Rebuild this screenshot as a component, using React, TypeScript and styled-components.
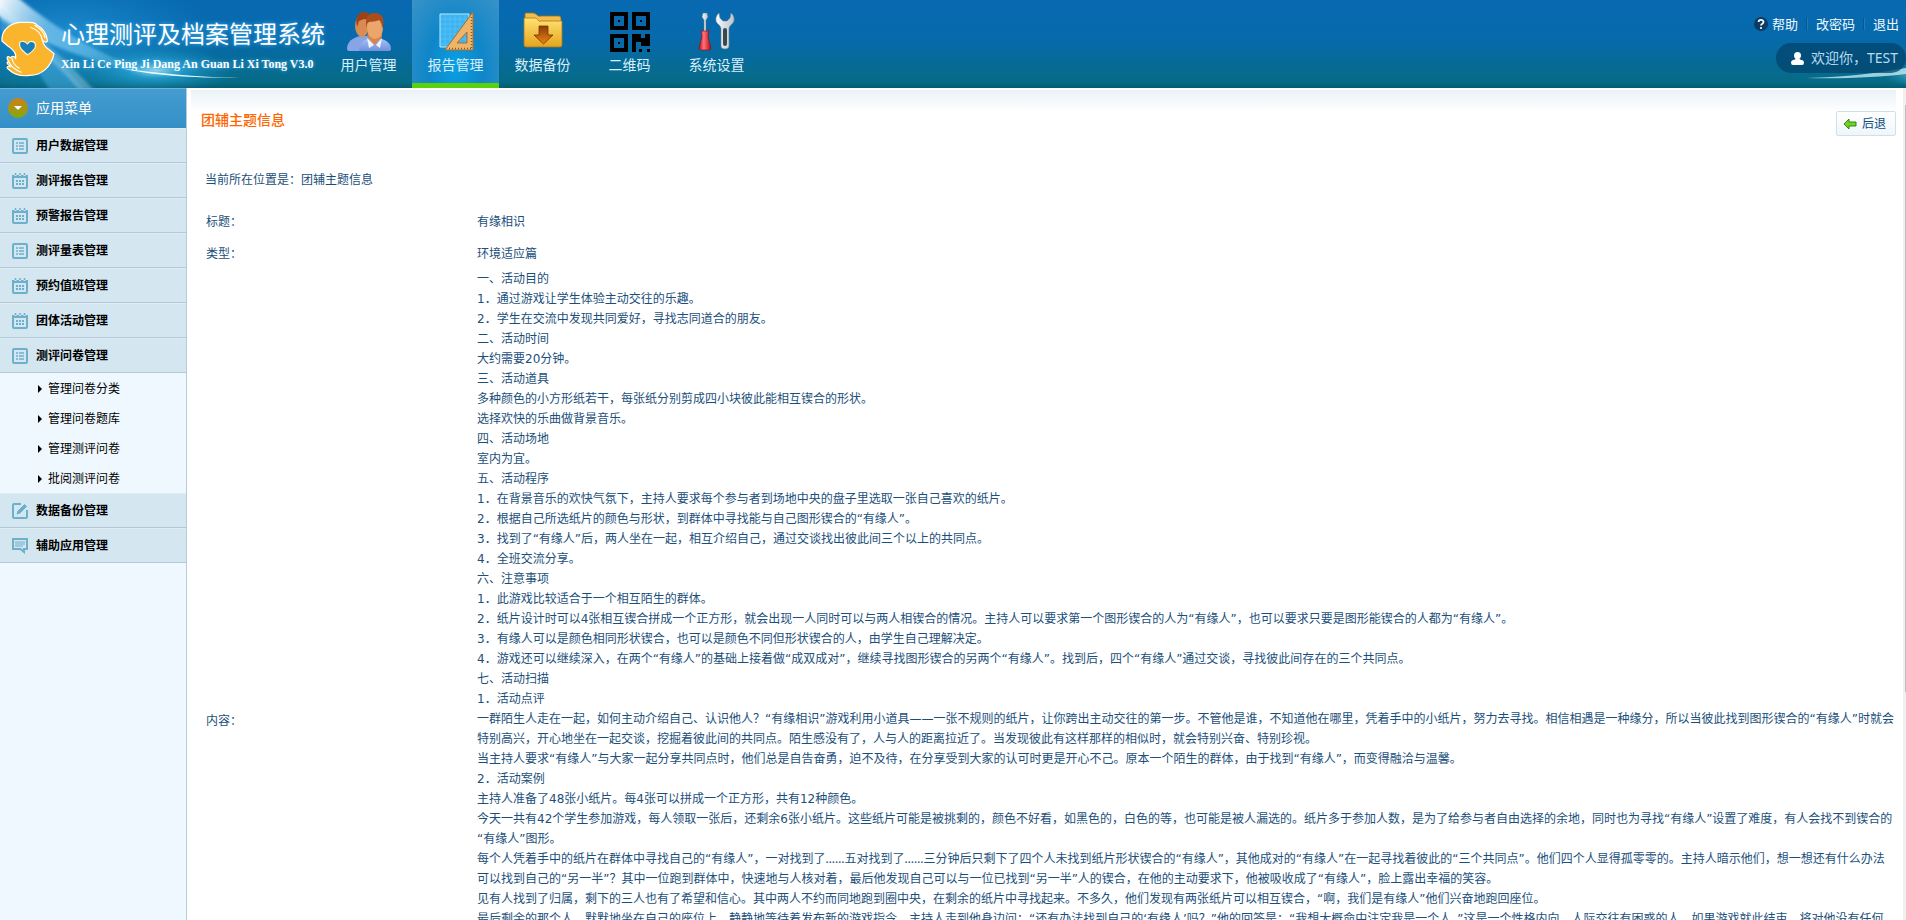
import React from "react";
import styled, { createGlobalStyle, css } from "styled-components";

const GlobalStyle = createGlobalStyle`
  * { box-sizing: border-box; }
  body {
    margin: 0;
    background: #fff;
    color: #1b4f7a;
    font-family: "DejaVu Sans", "Noto Sans CJK SC", sans-serif;
    font-size: 12px;
    line-height: 20px;
  }
  a { color: inherit; text-decoration: none; }
  button { font: inherit; cursor: pointer; }
  ul { list-style: none; margin: 0; padding: 0; }
`;

const Shell = styled.div`
  display: flex;
  flex-direction: column;
  height: 100vh;
  overflow: hidden;
`;

const Header = styled.header`
  position: relative;
  display: flex;
  flex: none;
  height: 88px;
  overflow: hidden;
  color: #d8effc;
  font-family: "Noto Sans", "Noto Sans CJK SC", sans-serif;
  background: linear-gradient(#0869b1 0, #066aab 40px, #066b86 82px, #055d72 88px);
`;

const Glow = styled.svg<{ $side: "left" | "right" }>`
  position: absolute;
  top: 0;
  ${(p) => (p.$side === "left" ? "left: 0;" : "right: 0;")}
`;

const Brand = styled.div`
  position: relative;
  display: flex;
  flex: none;
  width: 325px;
`;

const BrandText = styled.div`
  padding: 16px 0 0 6px;
  white-space: nowrap;
`;

const BrandName = styled.h1`
  margin: 0;
  font-size: 24px;
  line-height: 36px;
  font-weight: 400;
  color: #fff;
  text-shadow: 0 0 4px #4db4ee;
`;

const BrandLatin = styled.div`
  font: 700 12px/24px "Liberation Serif", serif;
  color: #fff;
  text-shadow: 0 0 4px #4db4ee;
`;

const TopNav = styled.nav`
  position: relative;
  display: flex;
  flex: 1;
`;

const NavItem = styled.a<{ $active?: boolean }>`
  display: flex;
  flex-direction: column;
  align-items: center;
  width: 87px;
  padding-top: 12px;
  font-size: 14px;
  line-height: 26px;
  ${(p) =>
    p.$active &&
    css`
      border-bottom: 5px solid #5bd10c;
      background: radial-gradient(ellipse at 50% 80%, #0aa0e4 0, #0f86c8 45%, #3a92c8 100%);
    `}
`;

const Account = styled.div`
  position: relative;
  display: flex;
  flex-direction: column;
  align-items: flex-end;
  padding-top: 14px;
  gap: 9px;
`;

const Links = styled.div`
  display: flex;
  align-items: center;
  padding-right: 7px;
  font-size: 13px;
  line-height: 20px;
  color: #f0f9ff;
  svg { margin-right: 4px; }
`;

const LinkDivider = styled.span`
  width: 2px;
  height: 12px;
  margin: 0 8px;
  border-left: 1px solid #0a5591;
  border-right: 1px solid #1a7bbd;
`;

const Welcome = styled.div`
  display: flex;
  align-items: center;
  gap: 7px;
  height: 30px;
  padding: 0 8px 0 15px;
  border-radius: 15px;
  font-size: 14px;
  color: #b5dcf1;
  background: rgba(3, 68, 110, 0.75);
`;

const Body = styled.div`
  display: flex;
  flex: 1;
  min-height: 0;
`;

const Sidebar = styled.aside`
  flex: none;
  width: 187px;
  border-right: 1px solid #b3cddc;
  background: #eff8fe;
  color: #000;
`;

const SideHead = styled.div`
  display: flex;
  align-items: center;
  gap: 8px;
  height: 40px;
  padding: 0 0 2px 8px;
  border-top: 1px solid #6db5dc;
  font-size: 14px;
  color: #fff;
  background: linear-gradient(#459cd0, #3390c7);
`;

const MenuLink = styled.a`
  display: flex;
  align-items: center;
  gap: 8px;
  height: 35px;
  padding-left: 12px;
  border-top: 1px solid #dfecf3;
  border-bottom: 1px solid #b3c8d6;
  font-weight: 700;
  background: #d4e6f0;
`;

const SubLink = styled.a`
  display: flex;
  align-items: center;
  gap: 6px;
  height: 30px;
  padding: 2px 0 0 38px;
`;

const Main = styled.main`
  flex: 1;
  min-width: 0;
  margin: 2px 7px 0 4px;
  overflow: hidden;
  background: linear-gradient(#eaf2f6, #fff 22px);
`;

const TitleBar = styled.div`
  display: flex;
  justify-content: space-between;
  align-items: flex-end;
  padding: 20px 0 0 10px;
`;

const Title = styled.h2`
  margin: 0;
  padding-bottom: 6px;
  font-size: 14px;
  line-height: 20px;
  font-weight: 500;
  color: #ff6600;
`;

const BackButton = styled.button`
  display: flex;
  align-items: center;
  gap: 5px;
  height: 25px;
  padding: 0 9px 0 6px;
  border: 1px solid #cfe0ea;
  border-radius: 2px;
  color: #0a4a7c;
  background: linear-gradient(#fff, #eff6fb);
`;

const Crumb = styled.p`
  margin: 0;
  padding: 34px 14px 0;
`;

const Info = styled.table`
  width: 100%;
  margin-top: 15px;
  border-collapse: collapse;
`;

const Label = styled.th<{ $tall?: boolean }>`
  width: 286px;
  padding: ${(p) => (p.$tall ? "0" : "2px")} 0 0 15px;
  font-weight: 400;
  text-align: left;
  vertical-align: middle;
`;

const Value = styled.td<{ $tall?: boolean }>`
  height: ${(p) => (p.$tall ? "904px" : "32px")};
  padding: ${(p) => (p.$tall ? "0" : "2px")} 0 0;
  vertical-align: ${(p) => (p.$tall ? "top" : "middle")};
  p { margin: 0; }
`;

const Ellipsis = styled.span`
  font-family: "Noto Sans", sans-serif;
  line-height: 1;
`;

const ScrollTrack = styled.div`
  flex: none;
  width: 3px;
  padding: 17px 0 0 2px;
  background: #f0f0f0;
`;

const ScrollThumb = styled.div`
  height: 72%;
  background: #bdbdbd;
`;

const LogoMark = () => (
  <svg width="56" height="88" viewBox="0 0 56 88" fill="#fbb52d" stroke="#fff" strokeWidth="1.2" strokeLinejoin="round">
    <path d="M2 41C1 29 12 21 24 22C31 22 35 21 38 25C43 28 47 32 48 39C49 43 46 43 43 40C44 44 45 46 49 49L55 54C52 67 43 76 30 76C22 77 14 75 9 70C6 68 7 66 11 67C7 65 6 62 9 62C6 58 7 55 11 58C12 56 15 56 16 59C17 53 13 49 8 46Z" />
    <path d="M31 27C37 29 42 33 43 40M35 25C41 28 45 33 46 38M12 58C13 64 16 67 20 69M9 62C11 67 15 70 22 73" fill="none" />
    <path d="M28 55C22 50 19 47 20 43C21 40 26 41 28 44C30 40 35 41 36 44C37 48 33 52 28 55Z" fill="#1680be" stroke="#fff4c8" />
  </svg>
);

const LeftGlow = () => (
  <Glow $side="left" width="300" height="88" viewBox="0 0 300 88" aria-hidden="true">
    <defs>
      <linearGradient id="beam" gradientUnits="userSpaceOnUse" x1="0" y1="0" x2="160" y2="80">
        <stop offset="0" stopColor="#fff" stopOpacity=".95" />
        <stop offset=".3" stopColor="#8fd0f5" stopOpacity=".65" />
        <stop offset="1" stopColor="#6fd4f5" stopOpacity=".3" />
      </linearGradient>
      <radialGradient id="flare">
        <stop offset="0" stopColor="#c9f7ff" stopOpacity=".9" />
        <stop offset=".35" stopColor="#2fb0e6" stopOpacity=".7" />
        <stop offset="1" stopColor="#1a8fc0" stopOpacity="0" />
      </radialGradient>
      <radialGradient id="haze">
        <stop offset="0" stopColor="#2c9fe0" stopOpacity=".7" />
        <stop offset="1" stopColor="#1a8fd0" stopOpacity="0" />
      </radialGradient>
      <filter id="soft"><feGaussianBlur stdDeviation="1.5" /></filter>
    </defs>
    <ellipse cx="70" cy="40" rx="150" ry="64" fill="url(#haze)" />
    <g filter="url(#soft)">
      <path d="M0 2C36 38 60 62 84 90H50C32 62 16 42 0 30Z" fill="#4fb2ea" opacity=".45" />
      <path d="M-4 -4H16C62 34 110 60 160 76C100 66 40 44 -4 14Z" fill="url(#beam)" />
      <path d="M0 8C40 36 66 60 94 90H80C54 62 24 34 0 20Z" fill="#a9dcf3" opacity=".4" />
    </g>
    <ellipse cx="156" cy="70" rx="80" ry="24" fill="url(#flare)" opacity=".85" />
    <path d="M120 68C150 75 190 78 240 78C195 77 155 73 120 68Z" fill="#e5fdff" />
  </Glow>
);

const RightGlow = () => (
  <Glow $side="right" width="120" height="88" viewBox="0 0 120 88" aria-hidden="true">
    <defs>
      <radialGradient id="flareRight" cx="1" cy=".5">
        <stop offset="0" stopColor="#e6fcff" />
        <stop offset=".4" stopColor="#54b6cc" stopOpacity=".7" />
        <stop offset="1" stopColor="#1a8fa8" stopOpacity="0" />
      </radialGradient>
    </defs>
    <ellipse cx="96" cy="75" rx="46" ry="13" fill="url(#flareRight)" />
    <path d="M20 78C60 77 94 73 120 68V74C94 77 60 79 20 78Z" fill="#dcfaff" opacity=".7" />
  </Glow>
);

const UsersIcon = () => (
  <svg width="48" height="40" viewBox="0 0 48 40">
    <defs>
      <linearGradient id="shirt" x1="0" y1="0" x2="0" y2="1"><stop stopColor="#a9c3f5" /><stop offset="1" stopColor="#6f90dc" /></linearGradient>
    </defs>
    <path d="M2 37C2 29 8 26 15 24H26L30 39H4Q2 39 2 37Z" fill="#86a4e6" />
    <ellipse cx="17" cy="14" rx="7" ry="11" fill="#d98c52" />
    <path d="M12 15C10 5 13 0 19 0C23 0 27 3 27 8L19 7L14 9Z" fill="#9d4216" />
    <path d="M14 39C14 31 19 27 26 26H34C41 28 46 31 46 37Q46 39 44 39Z" fill="url(#shirt)" />
    <path d="M22 25L30 33L37 25V20H23Z" fill="#d98449" />
    <path d="M22 26L29 33L24 36ZM37 26L31 33L35 36Z" fill="#eef3ff" />
    <ellipse cx="30" cy="16" rx="8" ry="11" fill="#eca56a" />
    <path d="M22 16C19 6 23 1 30 1C37 1 41 7 37 17C37 12 36 10 34 8C29 11 24 8 22 12Z" fill="#ab4d1b" />
  </svg>
);

const ReportIcon = () => (
  <svg width="40" height="40" viewBox="0 0 40 40">
    <path d="M4 2H33V35H4Z" fill="#3db3f2" stroke="#b9ecff" strokeWidth="1" />
    <path d="M5 7H33M5 12H33M5 17H33M5 22H33M5 27H33M5 32H33M9 2V35M14 2V35M19 2V35M24 2V35M29 2V35" stroke="#5cc4f6" strokeWidth=".7" />
    <path d="M37 0V38H9Z M31 20V31H21Z" fillRule="evenodd" fill="#eeb469" stroke="#a96c2e" strokeWidth="1" />
    <path d="M35.500 5V36M13 36.500H35" stroke="#8e541d" strokeWidth="1.500" strokeDasharray="1 2" fill="none" />
  </svg>
);

const FolderIcon = () => (
  <svg width="40" height="40" viewBox="0 0 40 40">
    <defs>
      <linearGradient id="folder" x1="0" y1="0" x2="0" y2="1"><stop stopColor="#ffe373" /><stop offset="1" stopColor="#e5a41d" /></linearGradient>
      <linearGradient id="down" x1="0" y1="0" x2="0" y2="1"><stop stopColor="#8b3b08" /><stop offset="1" stopColor="#ed8512" /></linearGradient>
    </defs>
    <path d="M2 2Q2 1 3 1H10Q12 1 14 3T18 4H36Q38 4 38 7V32H2Z" fill="#f1bd50" stroke="#a66f13" strokeWidth=".8" />
    <path d="M1 6H12Q14 6 15 8T18 9H39V33Q39 35 37 35H3Q1 35 1 33Z" fill="url(#folder)" stroke="#ae7715" strokeWidth=".8" />
    <path d="M16 14H25V23H30L20.500 32L11 23H16Z" fill="url(#down)" stroke="#7a3304" strokeWidth=".8" />
  </svg>
);

const QrIcon = () => (
  <svg width="40" height="40" viewBox="0 0 40 40" fill="#000" shapeRendering="crispEdges">
    <path
      fillRule="evenodd"
      d="M0 0H18V18H0ZM4 4V14H14V4ZM22 0H40V18H22ZM26 4V14H36V4ZM0 22H18V40H0ZM4 26V36H14V26Z"
    />
    <path d="M8 8H10V10H8ZM30 8H32V10H30ZM8 30H10V32H8ZM22 22H31V26H35V22H40V34H31V30H26V40H22ZM29 37H32V40H29ZM37 37H40V40H37Z" />
  </svg>
);

const ToolsIcon = () => (
  <svg width="40" height="40" viewBox="0 0 40 40">
    <defs>
      <linearGradient id="handle"><stop stopColor="#c20f1b" /><stop offset=".4" stopColor="#ff7377" /><stop offset="1" stopColor="#b10913" /></linearGradient>
      <linearGradient id="steel"><stop stopColor="#f8fafc" /><stop offset="1" stopColor="#b7c3ce" /></linearGradient>
    </defs>
    <path d="M6 1H10L11 5L9 8V20H7V8L5 5Z" fill="url(#steel)" stroke="#66737e" strokeWidth=".5" />
    <path d="M4 19H12L11 25L14 36Q14 38 11 38H5Q2 38 2 36L5 25Z" fill="url(#handle)" stroke="#8e0911" strokeWidth=".6" />
    <path d="M22 1C18 4 18 10 21 12C23 14 24 15 24 17V34Q24 37 28 37T32 34V17C32 15 33 14 35 12C38 10 38 4 34 1L33 6L30 9H26L23 6Z" fill="url(#steel)" stroke="#71808c" strokeWidth=".6" />
    <rect x="26" y="16" width="4" height="18" rx="2" fill="#3c464e" />
  </svg>
);

const HelpIcon = () => (
  <svg width="14" height="14" viewBox="0 0 14 14">
    <circle cx="7" cy="7" r="7" fill="#0b3a62" />
    <path d="M4.600 5C4.600 2.200 9.500 2.200 9.500 5C9.500 6.800 7 6.600 7 8.600" fill="none" stroke="#fff" strokeWidth="1.800" />
    <circle cx="7" cy="11" r="1.100" fill="#fff" />
  </svg>
);

const PersonIcon = () => (
  <svg width="13" height="13" viewBox="0 0 13 13" fill="#fff">
    <circle cx="6.500" cy="3.500" r="3.500" />
    <path d="M5 6H8L9 7.500Q13 8 13 10.500Q13 13 11 13H2Q0 13 0 10.500Q0 8 4 7.500Z" />
  </svg>
);

const ToggleIcon = () => (
  <svg width="20" height="20" viewBox="0 0 20 20">
    <defs>
      <linearGradient id="toggle" x1="0" y1="0" x2="0" y2="1"><stop stopColor="#cf7f1b" /><stop offset="1" stopColor="#83a90c" /></linearGradient>
    </defs>
    <circle cx="10" cy="10" r="10" fill="url(#toggle)" />
    <path d="M6 8H14L10 12Z" fill="#fff" />
  </svg>
);

type IconKind = "list" | "calendar" | "edit" | "chat";

const MenuIcon = ({ kind }: { kind: IconKind }) => (
  <svg width="16" height="16" viewBox="0 0 16 16" fill="none" stroke="#6db0cb" strokeWidth="2">
    {kind === "list" && (
      <>
        <rect x="1" y="1" width="14" height="14" rx="1" />
        <path d="M4 5H6M4 8H6M4 11H6M7 5H12M7 8H12M7 11H12" strokeWidth="1.500" />
      </>
    )}
    {kind === "calendar" && (
      <>
        <path d="M1 3V14Q1 15 2 15H14Q15 15 15 14V3" />
        <path d="M0 2V5H16V2H13.500V3H11.500V2H9V3H7V2H4.500V3H2.500V2Z" fill="#6db0cb" stroke="none" />
        <path d="M3.500 0V2M8 0V2M12.500 0V2" strokeWidth="1.500" />
        <path d="M4 8H12M4 11H12" strokeDasharray="2 1" />
      </>
    )}
    {kind === "edit" && (
      <>
        <path d="M9 1H2Q1 1 1 2V14Q1 15 2 15H14Q15 15 15 14V7" />
        <path d="M5 11L6 8L12.500 1.500L14.500 3.500L8 10Z" fill="#6db0cb" strokeWidth="1" />
      </>
    )}
    {kind === "chat" && (
      <>
        <path d="M1 1H15V11H12V14L8.500 11H1Z" />
        <path d="M3 4H13M3 6H13M3 8H11" strokeWidth="1" />
      </>
    )}
  </svg>
);

const Caret = () => (
  <svg width="4" height="8" viewBox="0 0 4 8"><path d="M0 0L4 4L0 8Z" fill="#000" /></svg>
);

const BackArrow = () => (
  <svg width="14" height="12" viewBox="0 0 14 12">
    <path d="M1 6L6 1V4H13V8H6V11Z" fill="#74d227" stroke="#2f8a10" strokeWidth="1" strokeLinejoin="round" />
  </svg>
);

const navItems = [
  { label: "用户管理", icon: <UsersIcon /> },
  { label: "报告管理", icon: <ReportIcon />, active: true },
  { label: "数据备份", icon: <FolderIcon /> },
  { label: "二维码", icon: <QrIcon /> },
  { label: "系统设置", icon: <ToolsIcon /> },
];

const menu: { label: string; icon: IconKind; children?: string[] }[] = [
  { label: "用户数据管理", icon: "list" },
  { label: "测评报告管理", icon: "calendar" },
  { label: "预警报告管理", icon: "calendar" },
  { label: "测评量表管理", icon: "list" },
  { label: "预约值班管理", icon: "calendar" },
  { label: "团体活动管理", icon: "calendar" },
  { label: "测评问卷管理", icon: "list", children: ["管理问卷分类", "管理问卷题库", "管理测评问卷", "批阅测评问卷"] },
  { label: "数据备份管理", icon: "edit" },
  { label: "辅助应用管理", icon: "chat" },
];

// A zero-width space (\u200b) marks where a line may break before an opening quote.
const paragraphs = [
  "一、活动目的",
  "1．通过游戏让学生体验主动交往的乐趣。",
  "2．学生在交流中发现共同爱好，寻找志同道合的朋友。",
  "二、活动时间",
  "大约需要20分钟。",
  "三、活动道具",
  "多种颜色的小方形纸若干，每张纸分别剪成四小块彼此能相互锲合的形状。",
  "选择欢快的乐曲做背景音乐。",
  "四、活动场地",
  "室内为宜。",
  "五、活动程序",
  "1．在背景音乐的欢快气氛下，主持人要求每个参与者到场地中央的盘子里选取一张自己喜欢的纸片。",
  "2．根据自己所选纸片的颜色与形状，到群体中寻找能与自己图形锲合的“有缘人”。",
  "3．找到了“有缘人”后，两人坐在一起，相互介绍自己，通过交谈找出彼此间三个以上的共同点。",
  "4．全班交流分享。",
  "六、注意事项",
  "1．此游戏比较适合于一个相互陌生的群体。",
  "2．纸片设计时可以4张相互锲合拼成一个正方形，就会出现一人同时可以与两人相锲合的情况。主持人可以要求第一个图形锲合的人为“有缘人”，也可以要求只要是图形能锲合的人都为“有缘人”。",
  "3．有缘人可以是颜色相同形状锲合，也可以是颜色不同但形状锲合的人，由学生自己理解决定。",
  "4．游戏还可以继续深入，在两个“有缘人”的基础上接着做“成双成对”，继续寻找图形锲合的另两个“有缘人”。找到后，四个“有缘人”通过交谈，寻找彼此间存在的三个共同点。",
  "七、活动扫描",
  "1．活动点评",
  "一群陌生人走在一起，如何主动介绍自己、认识他人？“有缘相识”游戏利用小道具——一张不规则的纸片，让你跨出主动交往的第一步。不管他是谁，不知道他在哪里，凭着手中的小纸片，努力去寻找。相信相遇是一种缘分，所以当彼此找到图形锲合的“有缘人”时就会特别高兴，开心地坐在一起交谈，挖掘着彼此间的共同点。陌生感没有了，人与人的距离拉近了。当发现彼此有这样那样的相似时，就会特别兴奋、特别珍视。",
  "当主持人要求“有缘人”与大家一起分享共同点时，他们总是自告奋勇，迫不及待，在分享受到大家的认可时更是开心不己。原本一个陌生的群体，由于找到“有缘人”，而变得融洽与温馨。",
  "2．活动案例",
  "主持人准备了48张小纸片。每4张可以拼成一个正方形，共有12种颜色。",
  "今天一共有42个学生参加游戏，每人领取一张后，还剩余6张小纸片。这些纸片可能是被挑剩的，颜色不好看，如黑色的，白色的等，也可能是被人漏选的。纸片多于参加人数，是为了给参与者自由选择的余地，同时也为寻找“有缘人”设置了难度，有人会找不到锲合的\u200b“有缘人”图形。",
  "每个人凭着手中的纸片在群体中寻找自己的“有缘人”，一对找到了……五对找到了……三分钟后只剩下了四个人未找到纸片形状锲合的“有缘人”，其他成对的“有缘人”在一起寻找着彼此的“三个共同点”。他们四个人显得孤零零的。主持人暗示他们，想一想还有什么办法可以找到自己的“另一半”？其中一位跑到群体中，快速地与人核对着，最后他发现自己可以与一位已找到“另一半”人的锲合，在他的主动要求下，他被吸收成了“有缘人”，脸上露出幸福的笑容。",
  "见有人找到了归属，剩下的三人也有了希望和信心。其中两人不约而同地跑到圈中央，在剩余的纸片中寻找起来。不多久，他们发现有两张纸片可以相互锲合，“啊，我们是有缘人”他们兴奋地跑回座位。",
  "最后剩余的那个人，默默地坐在自己的座位上，静静地等待着发布新的游戏指令。主持人走到他身边问：“还有办法找到自己的‘有缘人’吗？”他的回答是：“我想大概命中注定我是一个人。”这是一个性格内向、人际交往有困惑的人。如果游戏就此结束，将对他没有任何",
];

const Paragraph = ({ text }: { text: string }) => (
  <p>
    {text.split(/(……)/).map((part, i) => (part === "……" ? <Ellipsis key={i}>{part}</Ellipsis> : part))}
  </p>
);

export default function App() {
  return (
    <>
      <GlobalStyle />
      <Shell>
        <Header>
          <LeftGlow />
          <RightGlow />
          <Brand>
            <LogoMark />
            <BrandText>
              <BrandName>心理测评及档案管理系统</BrandName>
              <BrandLatin>Xin Li Ce Ping Ji Dang An Guan Li Xi Tong V3.0</BrandLatin>
            </BrandText>
          </Brand>
          <TopNav>
            {navItems.map((item) => (
              <NavItem key={item.label} href="#" $active={item.active}>
                {item.icon}
                {item.label}
              </NavItem>
            ))}
          </TopNav>
          <Account>
            <Links>
              <HelpIcon />
              <a href="#">帮助</a>
              <LinkDivider />
              <a href="#">改密码</a>
              <LinkDivider />
              <a href="#">退出</a>
            </Links>
            <Welcome>
              <PersonIcon />
              欢迎你，TEST
            </Welcome>
          </Account>
        </Header>
        <Body>
          <Sidebar>
            <SideHead>
              <ToggleIcon />
              应用菜单
            </SideHead>
            <ul>
              {menu.map((item) => (
                <li key={item.label}>
                  <MenuLink href="#">
                    <MenuIcon kind={item.icon} />
                    {item.label}
                  </MenuLink>
                  {item.children && (
                    <ul>
                      {item.children.map((child) => (
                        <li key={child}>
                          <SubLink href="#">
                            <Caret />
                            {child}
                          </SubLink>
                        </li>
                      ))}
                    </ul>
                  )}
                </li>
              ))}
            </ul>
          </Sidebar>
          <Main>
            <TitleBar>
              <Title>团辅主题信息</Title>
              <BackButton type="button">
                <BackArrow />
                后退
              </BackButton>
            </TitleBar>
            <Crumb>当前所在位置是：团辅主题信息</Crumb>
            <Info>
              <tbody>
                <tr>
                  <Label scope="row">标题：</Label>
                  <Value>有缘相识</Value>
                </tr>
                <tr>
                  <Label scope="row">类型：</Label>
                  <Value>环境适应篇</Value>
                </tr>
                <tr>
                  <Label scope="row" $tall>内容：</Label>
                  <Value $tall>
                    {paragraphs.map((text, i) => (
                      <Paragraph key={i} text={text} />
                    ))}
                  </Value>
                </tr>
              </tbody>
            </Info>
          </Main>
          <ScrollTrack>
            <ScrollThumb />
          </ScrollTrack>
        </Body>
      </Shell>
    </>
  );
}
